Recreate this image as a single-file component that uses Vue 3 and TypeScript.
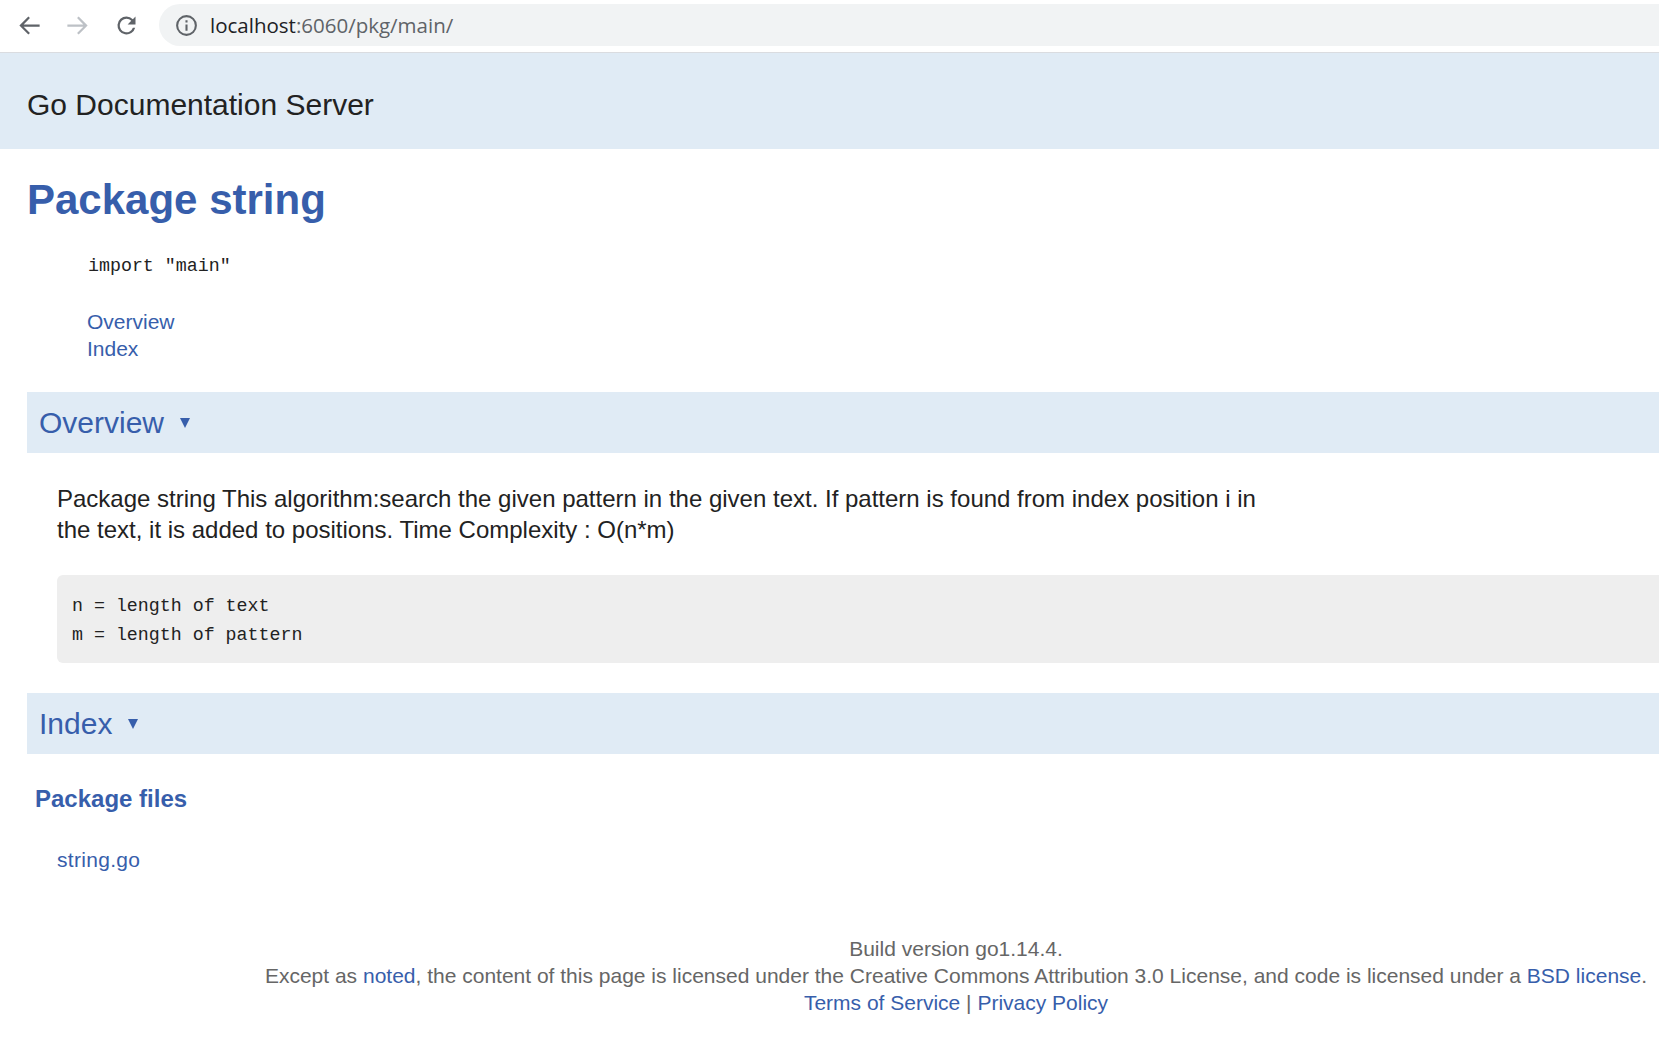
<script setup lang="ts">
const sections = { overview: 'Overview', index: 'Index' }
</script>

<template>
  <div class="window">
    <header class="chrome">
      <svg class="navIcon back" viewBox="0 0 24 24"><path d="M21 11H6.8l5.6-5.6L11 4l-8 8 8 8 1.4-1.4L6.8 13H21z" /></svg>
      <svg class="navIcon forward" viewBox="0 0 24 24"><path d="M3 11h14.2l-5.6-5.6L13 4l8 8-8 8-1.4-1.4 5.6-5.6H3z" /></svg>
      <svg class="navIcon reload" viewBox="0 0 24 24"><path d="M17.65 6.35A7.96 7.96 0 0 0 12 4a8 8 0 1 0 7.73 10h-2.08A6 6 0 1 1 12 6c1.66 0 3.14.69 4.22 1.78L13 11h7V4z" /></svg>
      <div class="address">
        <svg class="info" viewBox="0 0 24 24"><path d="M11 7h2v2h-2zm0 4h2v6h-2zm1-9a10 10 0 1 0 0 20 10 10 0 0 0 0-20zm0 18a8 8 0 1 1 0-16 8 8 0 0 1 0 16z" /></svg>
        <span class="host">localhost</span><span class="path">:6060/pkg/main/</span>
      </div>
    </header>

    <div class="page">
      <div class="topbar">Go Documentation Server</div>

      <main class="content">
        <h1>Package string</h1>
        <code class="importLine">import "main"</code>
        <nav class="jump">
          <a>{{ sections.overview }}</a>
          <a>{{ sections.index }}</a>
        </nav>

        <h2 class="toggle">{{ sections.overview }}<i class="caret"></i></h2>
        <p class="text">Package string This algorithm:search the given pattern in the given text. If pattern is found from index position i in the text, it is added to positions. Time Complexity : O(n*m)</p>
        <pre class="code">n = length of text
m = length of pattern</pre>

        <h2 class="toggle">{{ sections.index }}<i class="caret"></i></h2>
        <h3>Package files</h3>
        <a class="file">string.go</a>

        <footer class="footer">
          <div>Build version go1.14.4.</div>
          <div>Except as <a>noted</a>, the content of this page is licensed under the Creative Commons Attribution 3.0 License, and code is licensed under a <a>BSD license</a>.</div>
          <div><a>Terms of Service</a> | <a>Privacy Policy</a></div>
        </footer>
      </main>
    </div>
  </div>
</template>

<style>
html,
body {
  margin: 0;
  overflow: hidden;
  background: #fff;
}
</style>

<style scoped>
.window {
  width: 1659px;
  height: 1055px;
  overflow: hidden;
  font-family: "Liberation Sans", Arial, sans-serif;
  font-size: 21px;
  line-height: 27px;
  color: #222;
}

.chrome {
  display: flex;
  align-items: center;
  height: 50px;
  padding-bottom: 2px;
  border-bottom: 1px solid #dadce0;
  background: #fff;
}

.navIcon {
  flex: none;
  width: 27px;
  height: 27px;
  fill: #5f6368;
}

.back {
  margin-left: 16px;
}

.forward {
  margin-left: 21px;
  fill: #bdc1c6;
}

.reload {
  margin-left: 22px;
}

.address {
  flex: 1;
  display: flex;
  align-items: center;
  height: 42px;
  margin-left: 19px;
  padding-left: 15px;
  border-radius: 21px 0 0 21px;
  background: #f1f3f4;
  font-family: "Open Sans", sans-serif;
  font-size: 20.5px;
}

.info {
  width: 25px;
  height: 25px;
  margin-right: 11px;
  fill: #5f6368;
}

.host {
  color: #202124;
}

.path {
  color: #5f6368;
}

.page {
  width: 1912px;
}

.topbar {
  height: 96px;
  padding: 34px 0 0 27px;
  box-sizing: border-box;
  background: #e0ebf5;
  font-size: 30px;
  line-height: 36px;
}

.content {
  padding-left: 27px;
}

a {
  color: #375eab;
}

h1 {
  margin: 0;
  padding-top: 27px;
  font-size: 42px;
  line-height: 48px;
  color: #375eab;
}

.importLine {
  display: block;
  margin: 30px 0 0 61px;
  font-family: "Liberation Mono", monospace;
  font-size: 18.3px;
  line-height: 24px;
}

.jump {
  display: flex;
  flex-direction: column;
  margin: 30px 0 0 60px;
}

.toggle {
  display: flex;
  align-items: center;
  height: 61px;
  margin: 30px 0 0;
  padding-left: 12px;
  background: #e0ebf5;
  font-size: 30px;
  font-weight: normal;
  color: #375eab;
}

.caret {
  width: 0;
  height: 0;
  margin: 0 0 0 16px;
  border-left: 5.5px solid transparent;
  border-right: 5.5px solid transparent;
  border-top: 10px solid #375eab;
}

.text {
  width: 1210px;
  margin: 30px 0 0 30px;
  font-size: 24px;
  line-height: 31px;
  color: #222;
}

.code {
  height: 88px;
  margin: 30px 0 30px 30px;
  padding: 17px 15px 0;
  box-sizing: border-box;
  border-radius: 6px;
  background: #eee;
  font-family: "Liberation Mono", monospace;
  font-size: 18.3px;
  line-height: 29px;
  color: #222;
}

h3 {
  margin: 29px 0 0 8px;
  font-size: 24px;
  line-height: 31px;
  color: #375eab;
}

.file {
  display: block;
  margin: 32px 0 0 30px;
  letter-spacing: 0.3px;
}

.footer {
  margin: 62px 0 0 -27px;
  text-align: center;
  color: #666;
}
</style>
